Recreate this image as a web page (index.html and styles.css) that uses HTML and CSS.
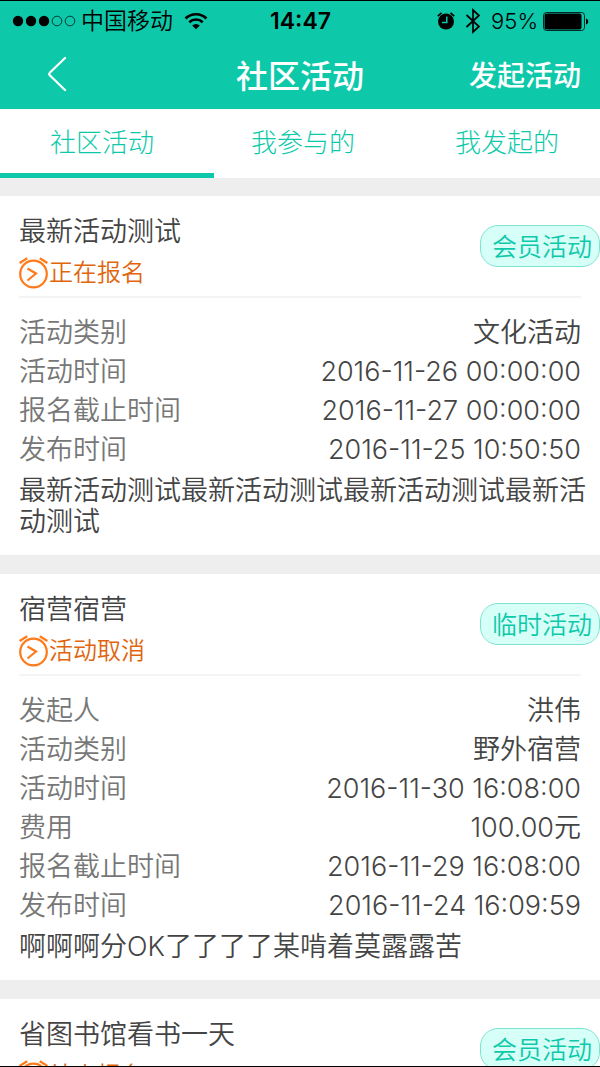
FILE: index.html
```html
<!DOCTYPE html>
<html lang="zh-CN">
<head>
    <meta charset="UTF-8">
    <meta name="viewport" content="width=device-width, initial-scale=1.0">
    <title>社区活动</title>
    <link rel="stylesheet" href="styles.css">
</head>
<body>

    <!-- Icon used by every activity card -->
    <svg class="sprite" aria-hidden="true">
        <symbol id="clock" viewBox="0 0 30 32">
            <g fill="none" stroke="#ff7a1a" stroke-width="2.200">
                <circle cx="14.500" cy="17" r="13.300"/>
                <path d="M.6 6 8.200 1.200M20.800 1.200 28.400 6M8.500 11.500 17 16.500 8.500 23.500"/>
            </g>
        </symbol>
    </svg>

    <header class="header">
        <div class="status-bar">
            <div class="carrier">
                <svg width="64" height="12" viewBox="0 0 64 12">
                    <circle cx="6" cy="6" r="5.200"/>
                    <circle cx="19" cy="6" r="5.200"/>
                    <circle cx="32" cy="6" r="5.200"/>
                    <circle cx="45" cy="6" r="4.800" fill="none" stroke="#000" stroke-width=".7"/>
                    <circle cx="58" cy="6" r="4.800" fill="none" stroke="#000" stroke-width=".7"/>
                </svg>
                <span>中国移动</span>
                <svg class="wifi" width="24" height="18" viewBox="0 0 24 18">
                    <g fill="none" stroke="#000" stroke-width="2.600">
                        <path d="M1.500 6.500a15 15 0 0 1 21 0"/>
                        <path d="M5.300 10.200a9.600 9.600 0 0 1 13.400 0"/>
                    </g>
                    <path d="M12 17.300 8.200 13.500a5.400 5.400 0 0 1 7.600 0z"/>
                </svg>
            </div>
            <span class="time">14:47</span>
            <div class="device">
                <svg width="18" height="18" viewBox="0 0 18 18">
                    <circle cx="9" cy="9.500" r="8"/>
                    <path d="M.8 4.200 4.500.9M13.500.9l3.700 3.300" stroke="#000" stroke-width="1.600"/>
                    <path d="M9.800 4.500v6H5" fill="none" stroke="#0dc9aa" stroke-width="1.500"/>
                </svg>
                <svg class="bluetooth" width="16" height="26" viewBox="0 0 16 26">
                    <path d="M1.500 7 14 18.500 8 24V2l6 5.500L1.500 19" fill="none" stroke="#000" stroke-width="1.700"/>
                </svg>
                <span class="percent">95%</span>
                <svg width="46" height="19" viewBox="0 0 46 19">
                    <rect x=".5" y=".5" width="41" height="18" rx="3" fill="none" stroke="#000" stroke-width=".8"/>
                    <rect x="1.500" y="1.500" width="37" height="16" rx="2"/>
                    <path d="M43 6.500c3 1 3 5 0 6z"/>
                </svg>
            </div>
        </div>
        <nav class="navbar">
            <button class="back" aria-label="返回">
                <svg width="20" height="36" viewBox="0 0 20 36">
                    <path d="M18 2 3 16.500q-1.500 1.500 0 3L18 34" fill="none" stroke="#fff" stroke-width="2.200" stroke-linecap="round"/>
                </svg>
            </button>
            <h1>社区活动</h1>
            <button class="create">发起活动</button>
        </nav>
    </header>

    <nav class="tabs">
        <a href="#community" class="tab active">社区活动</a>
        <a href="#joined" class="tab">我参与的</a>
        <a href="#created" class="tab">我发起的</a>
    </nav>

    <main class="list">
        <article class="card">
            <div class="card-head">
                <div>
                    <h2>最新活动测试</h2>
                    <p class="state"><svg class="clock"><use href="#clock"/></svg>正在报名</p>
                </div>
                <span class="badge">会员活动</span>
            </div>
            <dl class="info">
                <div><dt>活动类别</dt><dd>文化活动</dd></div>
                <div><dt>活动时间</dt><dd>2016-11-26 00:00:00</dd></div>
                <div><dt>报名截止时间</dt><dd>2016-11-27 00:00:00</dd></div>
                <div><dt>发布时间</dt><dd>2016-11-25 10:50:50</dd></div>
            </dl>
            <p class="desc">最新活动测试最新活动测试最新活动测试最新活动测试</p>
        </article>

        <article class="card">
            <div class="card-head">
                <div>
                    <h2>宿营宿营</h2>
                    <p class="state"><svg class="clock"><use href="#clock"/></svg>活动取消</p>
                </div>
                <span class="badge">临时活动</span>
            </div>
            <dl class="info">
                <div><dt>发起人</dt><dd>洪伟</dd></div>
                <div><dt>活动类别</dt><dd>野外宿营</dd></div>
                <div><dt>活动时间</dt><dd>2016-11-30 16:08:00</dd></div>
                <div><dt>费用</dt><dd>100.00元</dd></div>
                <div><dt>报名截止时间</dt><dd>2016-11-29 16:08:00</dd></div>
                <div><dt>发布时间</dt><dd>2016-11-24 16:09:59</dd></div>
            </dl>
            <p class="desc">啊啊啊分OK了了了了某啃着莫露露苦</p>
        </article>

        <article class="card">
            <div class="card-head">
                <div>
                    <h2>省图书馆看书一天</h2>
                    <p class="state"><svg class="clock"><use href="#clock"/></svg>结束报名</p>
                </div>
                <span class="badge">会员活动</span>
            </div>
        </article>
    </main>

</body>
</html>
```

FILE: styles.css
```css
* {
    box-sizing: border-box;
    margin: 0;
    padding: 0;
}

body {
    display: flex;
    flex-direction: column;
    height: 100vh;
    overflow: hidden;
    border-top: 1px solid #000;
    border-bottom: 1px solid #000;
    background: #eee;
    color: #444;
    font-family: Inter, "Noto Sans CJK SC", sans-serif;
    font-size: 26px;
    font-weight: 350;
}

h1, h2 {
    font-weight: inherit;
}

button {
    border: none;
    background: none;
    color: inherit;
    font: inherit;
    cursor: pointer;
}

.sprite {
    position: absolute;
    width: 0;
    height: 0;
}

/* Header */
.header {
    flex: none;
    background: #0dc9aa;
}

.status-bar,
.navbar {
    display: grid;
    grid-template-columns: 1fr auto 1fr;
    align-items: center;
}

.status-bar {
    height: 40px;
    padding: 0 11px 0 12px;
    color: #000;
    font-size: 23px;
    line-height: 40px;
}

.carrier,
.device {
    display: flex;
    align-items: center;
    gap: 5px;
}

.device {
    justify-content: flex-end;
}

.wifi {
    margin-left: 6px;
}

.bluetooth {
    margin: 0 5px;
}

.time {
    font-weight: 600;
}

.percent {
    font-size: 22px;
}

.navbar {
    height: 68px;
    padding: 0 19px 3px 47px;
    color: #fff;
    font-weight: 500;
}

.back {
    justify-self: start;
    height: 36px;
}

.navbar h1 {
    margin-right: 28px;
    font-size: 32px;
}

.create {
    justify-self: end;
    font-size: 28px;
}

/* Tabs */
.tabs {
    display: grid;
    flex: none;
    grid-template-columns: 34% 33% 35%;
    background: #fff;
}

.tab {
    position: relative;
    height: 69px;
    color: #0dc9aa;
    font-weight: 300;
    line-height: 67px;
    text-align: center;
    text-decoration: none;
}

.tab.active::after {
    content: "";
    position: absolute;
    bottom: 0;
    left: 0;
    width: 105%;
    height: 5px;
    background: #0dc9aa;
}

/* Activity list */
.list {
    display: flex;
    flex: 1;
    flex-direction: column;
    gap: 19px;
    min-height: 0;
    padding-top: 18px;
    overflow: hidden;
}

.card {
    flex: none;
    padding: 16px 19px 18px;
    background: #fff;
}

.card-head {
    display: flex;
    justify-content: space-between;
    align-items: flex-start;
    padding-bottom: 2px;
    border-bottom: 2px solid #f4f4f4;
}

.card-head h2 {
    font-size: 27px;
    line-height: 40px;
}

.state {
    display: flex;
    align-items: center;
    color: #e0650d;
    font-size: 24px;
    line-height: 42px;
}

.clock {
    width: 30px;
    height: 32px;
}

.badge {
    height: 42px;
    margin: 13px -19px 0 0;
    padding: 0 7px 0 11px;
    border: 1px solid #7fe3d2;
    border-radius: 18px;
    background: #d6fff8;
    color: #0dc9aa;
    font-size: 25px;
    line-height: 42px;
}

.info {
    padding-top: 15px;
    font-size: 27px;
    line-height: 39px;
}

.info div {
    display: flex;
    justify-content: space-between;
}

.info dt {
    color: #777;
}

.desc {
    margin: 6px -6px 0 0;
    font-size: 27px;
    line-height: 31px;
}
```
